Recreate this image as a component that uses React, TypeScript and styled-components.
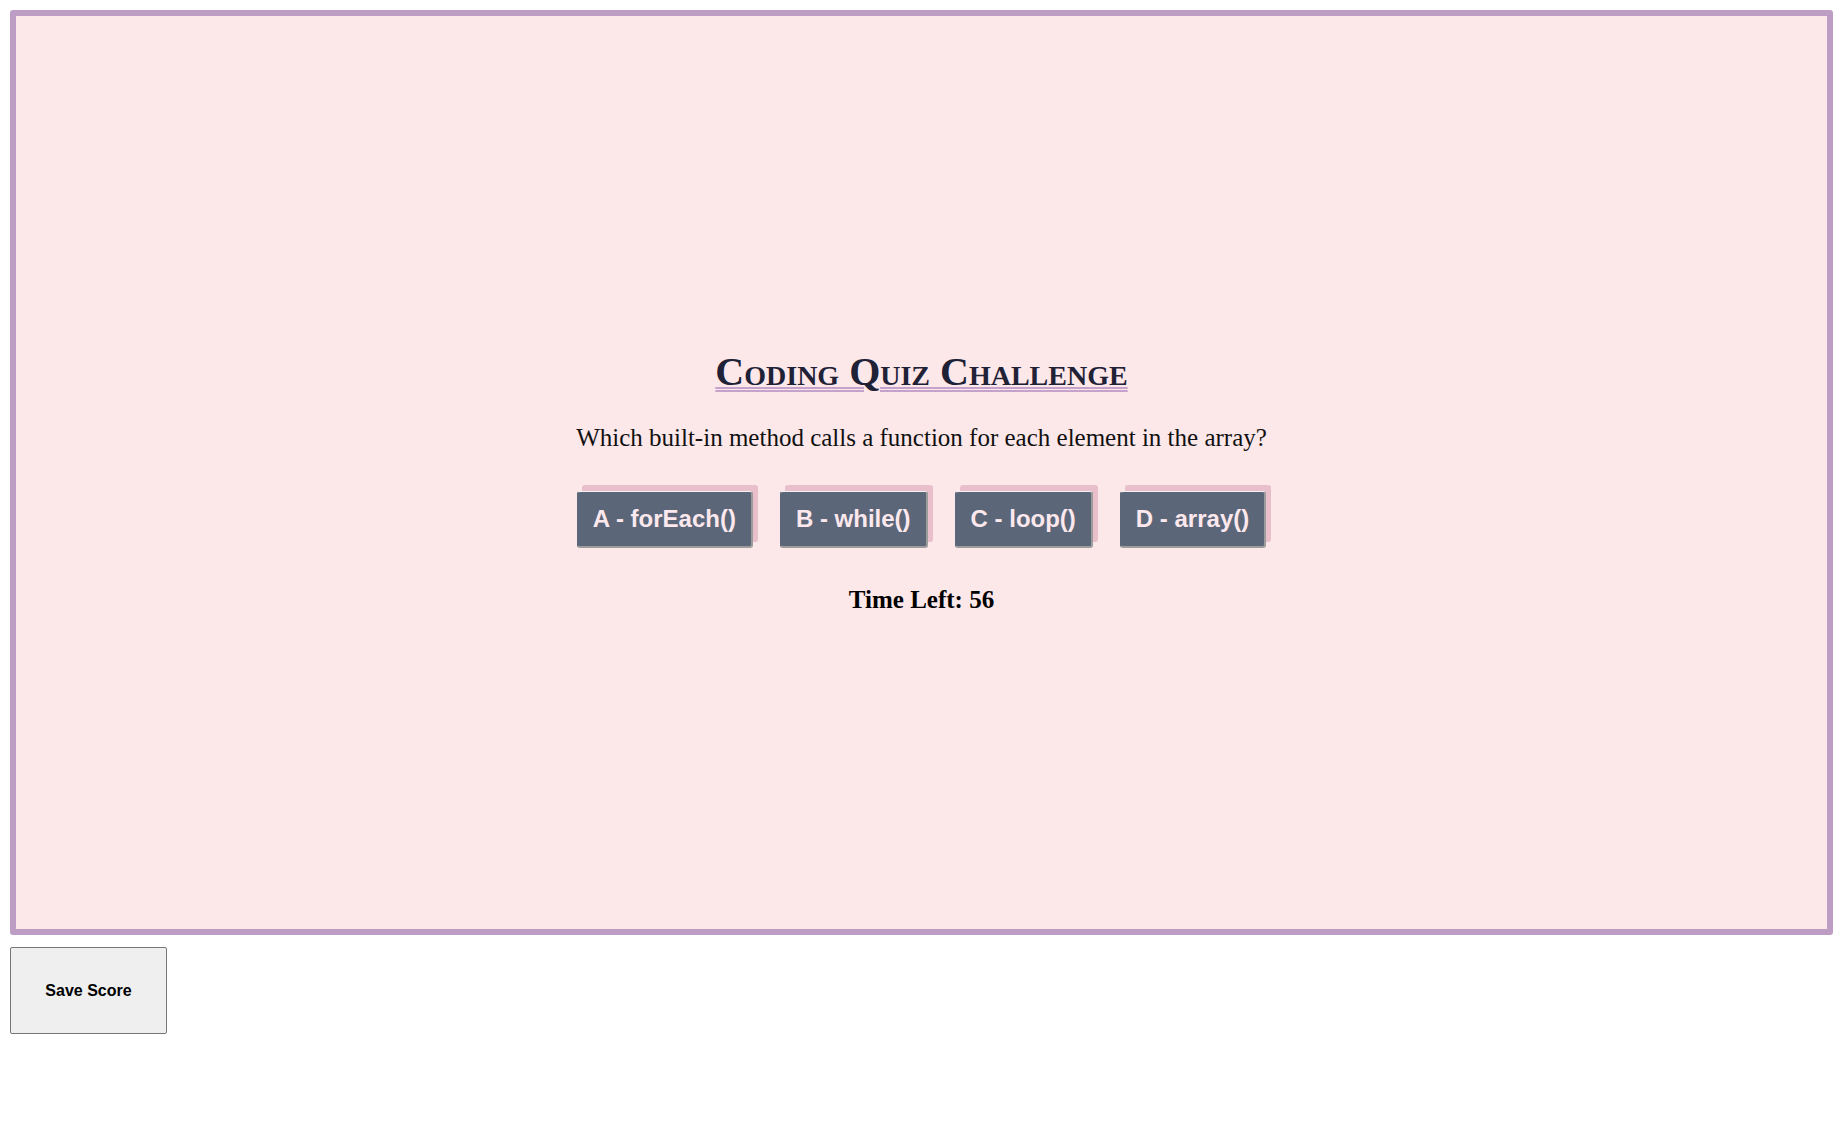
import React from "react";
import styled, { createGlobalStyle } from "styled-components";

const GlobalStyle = createGlobalStyle`
  html, body {
    margin: 0;
    padding: 0;
    background: #ffffff;
  }
  body {
    font-family: "Liberation Serif", "Times New Roman", serif;
  }
`;

const Page = styled.div`
  padding: 10px;
  display: flex;
  flex-direction: column;
  align-items: flex-start;
  gap: 12px;
`;

const QuizBox = styled.main`
  box-sizing: border-box;
  width: 100%;
  height: 925px;
  border: 6px solid #bd9dc4;
  border-radius: 3px;
  background: #fce7e9;
  display: flex;
  flex-direction: column;
  align-items: center;
  padding-top: 334px;
`;

const Title = styled.h1`
  margin: 0;
  font-family: "Liberation Serif", "Times New Roman", serif;
  font-size: 40px;
  line-height: 44px;
  font-weight: 700;
  font-variant: small-caps;
  color: #1f2136;
  text-decoration: underline double #c4a2cb;
  text-decoration-thickness: 2px;
  text-underline-offset: 2px;
`;

const Question = styled.p`
  margin: 30px 0 0;
  font-size: 25px;
  line-height: 28px;
  color: #111111;
`;

const Choices = styled.div`
  margin-top: 39px;
  display: flex;
  gap: 27px;
`;

const Choice = styled.button`
  box-sizing: border-box;
  height: 57px;
  padding: 13px 15px;
  font-family: "Liberation Sans", Arial, sans-serif;
  font-size: 24px;
  line-height: 28px;
  font-weight: 700;
  color: #fde8ee;
  background: #5b6678;
  border-style: solid;
  border-width: 1px 2px 2px 1px;
  border-color: #f3f1f3 #9c9c9c #9c9c9c #5b6678;
  border-radius: 3px;
  box-shadow: 5px -6px 0 #e8bfcb;
  cursor: pointer;
`;

const Timer = styled.h3`
  margin: 38px 0 0;
  font-size: 25px;
  line-height: 28px;
  font-weight: 700;
  color: #000000;
`;

const SaveButton = styled.button`
  box-sizing: border-box;
  width: 157px;
  height: 87px;
  font-family: "Liberation Sans", Arial, sans-serif;
  font-size: 16px;
  font-weight: 700;
  color: #000000;
  background: #efefef;
  border: 1px solid #767676;
  border-radius: 2px;
  cursor: pointer;
`;

const choices = ["A - forEach()", "B - while()", "C - loop()", "D - array()"];

export default function App() {
  return (
    <>
      <GlobalStyle />
      <Page>
        <QuizBox>
          <Title>Coding Quiz Challenge</Title>
          <Question>Which built-in method calls a function for each element in the array?</Question>
          <Choices>
            {choices.map((c) => (
              <Choice key={c}>{c}</Choice>
            ))}
          </Choices>
          <Timer>Time Left: 56</Timer>
        </QuizBox>
        <SaveButton>Save Score</SaveButton>
      </Page>
    </>
  );
}
